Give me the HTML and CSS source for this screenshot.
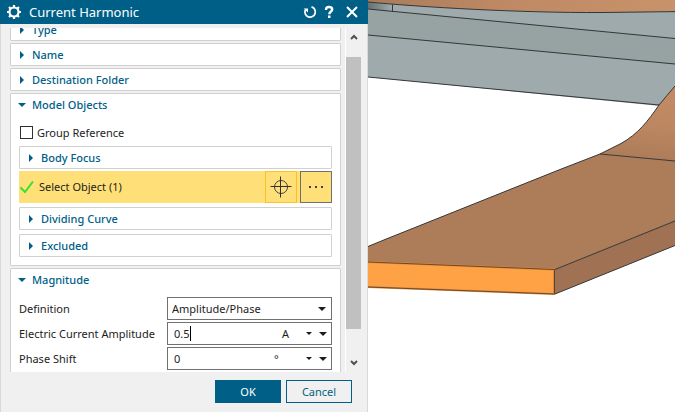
FILE: index.html
```html
<!DOCTYPE html>
<html lang="en">
<head>
<meta charset="utf-8">
<title>Current Harmonic</title>
<link rel="stylesheet" href="styles.css">
</head>
<body>
<main class="workspace">
  <form class="dialog">
    <header class="titlebar">
      <svg class="gear" viewBox="0 0 16 16" aria-hidden="true">
        <circle cx="8" cy="8" r="4.500" fill="none" stroke="#fff" stroke-width="2.200"/>
        <path d="M8 1v3M8 12v3M1 8h3M12 8h3M3 3l2 2M11 11l2 2M13 3l-2 2M5 11l-2 2" stroke="#fff" stroke-width="2.200"/>
      </svg>
      <h1 class="title">Current Harmonic</h1>
      <button type="button" class="tool" aria-label="Reset">
        <svg viewBox="0 0 14 14"><path d="M8.500 1.900A5.200 5.200 0 1 1 2.300 5" fill="none" stroke="#fff" stroke-width="1.800"/><path d="M.6 3.400H5V7.500z" fill="#fff"/></svg>
      </button>
      <button type="button" class="tool" aria-label="Help">
        <svg viewBox="0 0 14 14"><path d="M4 5C4 2.500 5.200 2 7 2s3.200.6 3.200 2.500C10.200 6.600 7.300 6.400 7.300 9.200" fill="none" stroke="#fff" stroke-width="2.400"/><rect x="6" y="10.500" width="2.500" height="2.500" fill="#fff"/></svg>
      </button>
      <button type="button" class="tool tool-close" aria-label="Close">
        <svg viewBox="0 0 14 14"><path d="M2 2l10 10M12 2L2 12" stroke="#fff" stroke-width="2"/></svg>
      </button>
    </header>

    <div class="body">
      <div class="viewport">
        <div class="groups">
          <section class="panel"><button type="button" class="head">Type</button></section>
          <section class="panel"><button type="button" class="head">Name</button></section>
          <section class="panel"><button type="button" class="head">Destination Folder</button></section>
          <section class="panel">
            <button type="button" class="head open">Model Objects</button>
            <div class="content objects">
              <label class="check"><input type="checkbox">Group Reference</label>
              <section class="panel"><button type="button" class="head">Body Focus</button></section>
              <div class="select-row">
                <svg class="tick" viewBox="0 0 16 16" aria-hidden="true"><path d="M1.500 8.500L6 13L14 2.500" fill="none" stroke="#2fe52f" stroke-width="2"/></svg>
                <span class="select-text">Select Object (1)</span>
                <button type="button" class="square target" aria-label="Pick object">
                  <svg viewBox="0 0 22 22"><circle cx="11" cy="11" r="6.500" fill="none" stroke="#404040"/><path d="M10.500 .5v21M.5 10.500h21" stroke="#303030"/></svg>
                </button>
                <button type="button" class="square more" aria-label="More options">
                  <svg viewBox="0 0 22 22"><path d="M4 10h2v2H4zM10 10h2v2h-2zM16 10h2v2h-2z" fill="#404040"/></svg>
                </button>
              </div>
              <section class="panel"><button type="button" class="head">Dividing Curve</button></section>
              <section class="panel"><button type="button" class="head">Excluded</button></section>
            </div>
          </section>
          <section class="panel">
            <button type="button" class="head open">Magnitude</button>
            <div class="content fields">
              <label for="definition">Definition</label>
              <div class="field choice">
                <select id="definition"><option>Amplitude/Phase</option></select>
                <span class="arrow"></span>
              </div>
              <label for="amplitude">Electric Current Amplitude</label>
              <div class="field">
                <input id="amplitude" type="text" value="0.5"><span class="caret"></span>
                <span class="unit">A</span>
                <button type="button" class="drop" aria-label="Amplitude unit"><span class="arrow small"></span></button>
                <button type="button" class="drop" aria-label="Amplitude options"><span class="arrow"></span></button>
              </div>
              <label for="phase">Phase Shift</label>
              <div class="field">
                <input id="phase" type="text" value="0">
                <span class="unit degree">°</span>
                <button type="button" class="drop" aria-label="Phase unit"><span class="arrow small"></span></button>
                <button type="button" class="drop" aria-label="Phase options"><span class="arrow"></span></button>
              </div>
            </div>
          </section>
        </div>
      </div>
      <div class="scrollbar" aria-hidden="true">
        <svg class="chevron" viewBox="0 0 8 6"><path d="M1 5l3-3 3 3" fill="none" stroke="#505050" stroke-width="2"/></svg>
        <div class="thumb"></div>
        <svg class="chevron" viewBox="0 0 8 6"><path d="M1 1l3 3 3-3" fill="none" stroke="#505050" stroke-width="2"/></svg>
      </div>
    </div>

    <footer class="actions">
      <button type="button" class="action primary">OK</button>
      <button type="button" class="action">Cancel</button>
    </footer>
  </form>

  <svg class="scene" viewBox="368 0 307 412" preserveAspectRatio="xMinYMin slice" role="img" aria-label="Conductor model">
    <defs>
      <linearGradient id="top" x1="0" x2="1"><stop offset="0" stop-color="#a97b5b"/><stop offset=".4" stop-color="#bd8863"/><stop offset="1" stop-color="#c8926a"/></linearGradient>
      <linearGradient id="bend" gradientUnits="userSpaceOnUse" x1="655" y1="100" x2="648" y2="158"><stop offset="0" stop-color="#c18a64"/><stop offset=".4" stop-color="#bd8761"/><stop offset="1" stop-color="#ad7d59"/></linearGradient>
      <linearGradient id="shade" x1="0" x2="1"><stop offset="0" stop-color="#677071"/><stop offset="1" stop-color="#9eaaab"/></linearGradient>
    </defs>
    <path d="M368 0H675V106H660L368 77Z" fill="#9eaaab"/>
    <path d="M368 9L675 38.500V64L368 35Z" fill="#97a2a3"/>
    <path d="M368 2L392 4.500V11.500L368 9Z" fill="url(#shade)"/>
    <path d="M368 0V2C420 7 520 13 602 12.500L675 11.600V0Z" fill="url(#top)"/>
    <path d="M675 86L659 105C648 121 638 134 621 143.500L600 154L675 161Z" fill="url(#bend)"/>
    <path d="M600 154L560 169.500L385 239.500L368 246.500V262L555 269.500L675 221V161Z" fill="#ad7d59"/>
    <path d="M555 269.500L675 221V245.500L555 294Z" fill="#a07152"/>
    <path d="M368 262L555 269.500V294L368 287Z" fill="#ffa145"/>
    <g fill="none" stroke="#343638" stroke-width="1">
      <path d="M368 2C420 7 520 13 602 12.500L675 11.600M392.500 4.500V11.500M368 9L675 38.500M368 35L675 64M368 77L659 105"/>
      <path d="M675 86L659 105C648 121 638 134 621 143.500L600 154L560 169.500L385 239.500L368 246.500M600 154L675 161"/>
      <path d="M555 269.500L675 221M555 294L675 245.500"/>
    </g>
    <path d="M368 262L554 269.500V294L368 287" fill="none" stroke="#e08a38" stroke-width="2"/>
    <path d="M368 262L554.500 269.500M554.500 294L368 287" fill="none" stroke="#4a3a2c" stroke-width=".8"/>
    <path d="M554.500 269.500V294" stroke="#5a4630"/>
  </svg>
</main>
</body>
</html>
```
FILE: styles.css
```css
*, *::before { box-sizing: border-box; }

body {
  margin: 0;
  background: #fff;
  color: #1c1c1c;
  font: 11px/16px "Noto Sans", "Open Sans", sans-serif;
}

button, input, select {
  margin: 0;
  padding: 0;
  border: 0;
  background: none;
  color: inherit;
  font: inherit;
}

.workspace {
  display: flex;
  height: 100vh;
  overflow: hidden;
}

.dialog {
  flex: 0 0 368px;
  min-width: 0;
  display: flex;
  flex-direction: column;
  background: #f0f0f0;
}

.scene {
  flex: 1;
  min-width: 0;
  height: 100%;
}

.titlebar {
  display: flex;
  align-items: center;
  height: 24px;
  padding: 0 9px 0 6px;
  background: #005f87;
  color: #fff;
}

.gear { width: 16px; height: 16px; }

.title {
  flex: 1;
  margin: 0 0 0 7px;
  font-size: 13px;
  font-weight: 400;
}

.tool {
  width: 14px;
  height: 14px;
  margin-left: 5px;
}

.tool svg { display: block; }

.tool-close { margin-left: 9px; }

.body {
  flex: 1;
  min-height: 0;
  display: flex;
  gap: 4px;
  padding: 4px 6px 0 9px;
  border: solid #d9d9d9;
  border-width: 0 1px;
}

.viewport {
  flex: 1;
  overflow: hidden;
}

.groups { margin-top: -10px; }

.panel {
  margin-bottom: 2px;
  border: 1px solid #d0d0d0;
  border-radius: 1px;
  background: #fff;
}

.head {
  display: flex;
  align-items: center;
  width: 100%;
  height: 21px;
  padding-left: 9px;
  color: #006088;
  font-weight: 500;
}

.head::before {
  content: "";
  width: 4px;
  margin-right: 8px;
  border: solid transparent;
  border-width: 4px 0 4px 4px;
  border-left-color: #005f87;
}

.head.open { padding-left: 7px; }

.head.open::before {
  width: 8px;
  margin-right: 6px;
  border-width: 4px 4px 0;
  border-color: #005f87 transparent transparent;
}

.content { padding: 0 8px; }

.objects {
  display: grid;
  gap: 4px;
  padding-top: 8px;
  padding-bottom: 8px;
}

.objects .panel { margin: 0; }

.check {
  display: flex;
  align-items: center;
  gap: 4px;
  height: 19px;
  padding-left: 1px;
}

.check input {
  appearance: none;
  width: 13px;
  height: 13px;
  border: 1px solid #303030;
  background: #fff;
}

.select-row {
  display: flex;
  align-items: center;
  height: 32px;
  margin-top: -2px;
  background: #ffe078;
}

.tick { width: 16px; height: 16px; }

.select-text {
  flex: 1;
  margin-left: 4px;
}

.square {
  display: grid;
  place-items: center;
  width: 32px;
  height: 32px;
  border: 1px solid #ffc020;
}

.square svg { width: 22px; height: 22px; }

.more {
  margin-left: 3px;
  border-color: #707070;
}

.fields {
  display: grid;
  grid-template-columns: 148px minmax(0, 1fr);
  align-items: center;
  row-gap: 2px;
  padding-top: 7px;
  padding-bottom: 8px;
}

.field {
  position: relative;
  display: flex;
  align-items: center;
  height: 23px;
  padding: 0 1px 0 6px;
  border: 1px solid #707070;
  background: #fff;
}

.choice { padding: 0 4px; }

.field select {
  flex: 1;
  appearance: none;
  outline: 0;
}

.field input {
  flex: 1;
  min-width: 0;
  outline: 0;
}

.caret {
  position: absolute;
  left: 22px;
  top: 3px;
  width: 1px;
  height: 15px;
  background: #000;
}

.unit { width: 20px; }

.degree { width: 28px; }

.drop {
  display: grid;
  place-items: center;
  width: 14px;
  height: 21px;
}

.arrow {
  margin-right: 1px;
  border: solid transparent;
  border-width: 4px 4px 0;
  border-top-color: #1c1c1c;
}

.small { border-width: 3px 3px 0; }

.scrollbar {
  display: flex;
  flex-direction: column;
  align-items: center;
  width: 16px;
  border-left: 1px solid #fff;
}

.chevron {
  flex: none;
  width: 8px;
  height: 6px;
  margin: 6px 0;
}

.thumb {
  flex: 0 0 79%;
  width: 100%;
  margin: 11px 0 auto;
  background: #c0c0c0;
}

.actions {
  display: flex;
  justify-content: flex-end;
  gap: 5px;
  padding: 8px 15px 9px;
  border: solid #d9d9d9;
  border-width: 0 1px;
}

.action {
  width: 66px;
  height: 23px;
  border: 1px solid #005f87;
  color: #005f87;
}

.primary {
  background: #005f87;
  color: #fff;
}
```
